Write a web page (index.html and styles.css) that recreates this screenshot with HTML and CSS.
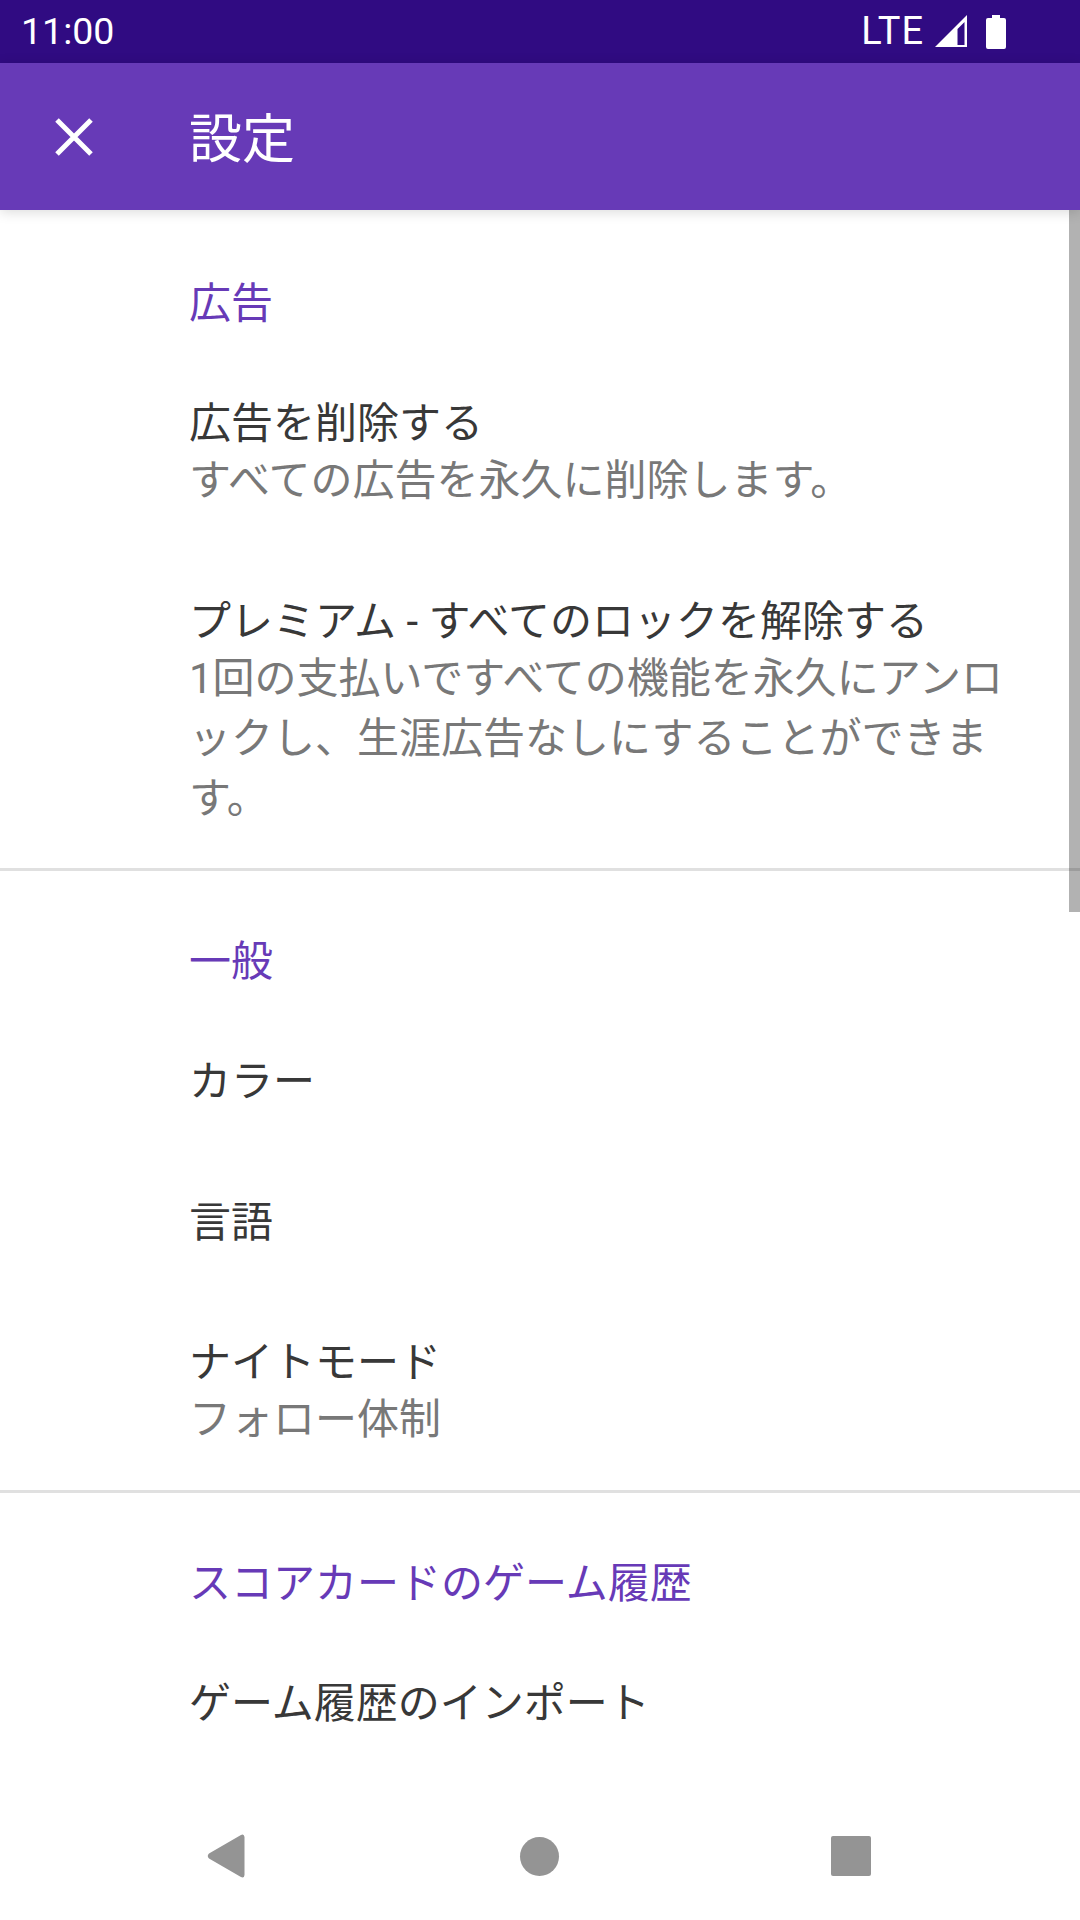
FILE: index.html
```html
<!DOCTYPE html>
<html lang="ja">
<head>
    <meta charset="UTF-8">
    <meta name="viewport" content="width=device-width, initial-scale=1.0">
    <link rel="stylesheet" href="styles.css">
    <title>設定</title>
</head>
<body>
    <div class="screen">
        <div class="status-bar">
            <span class="time">11:00</span>
            <div class="status-icons">
                <span class="lte">LTE</span>
                <svg class="signal" width="33" height="33" viewBox="0 0 33 33">
                    <path fill="#fff" fill-rule="evenodd" d="M32 0V32H0ZM29.500 7 22.500 14V30H29.500Z"/>
                </svg>
                <svg class="battery" width="20" height="34" viewBox="0 0 20 34">
                    <path fill="#fff" d="M6 0H14V3H18Q20 3 20 5V32Q20 34 18 34H2Q0 34 0 32V5Q0 3 2 3H6Z"/>
                </svg>
            </div>
        </div>

        <div class="toolbar">
            <svg class="close-icon" width="38" height="38" viewBox="0 0 38 38">
                <path stroke="#fff" stroke-width="5" d="M2 2 36 36M36 2 2 36"/>
            </svg>
            <h1>設定</h1>
        </div>

        <div class="list">
            <div class="scrollbar"></div>

            <section class="group">
                <h2>広告</h2>
                <div class="item">
                    <p class="title">広告を削除する</p>
                    <p class="summary">すべての広告を永久に削除します。</p>
                </div>
                <div class="item">
                    <p class="title">プレミアム - すべてのロックを解除する</p>
                    <p class="summary">1回の支払いですべての機能を永久にアンロックし、生涯広告なしにすることができます。</p>
                </div>
            </section>

            <section class="group">
                <h2>一般</h2>
                <div class="item">
                    <p class="title">カラー</p>
                </div>
                <div class="item">
                    <p class="title">言語</p>
                </div>
                <div class="item">
                    <p class="title">ナイトモード</p>
                    <p class="summary">フォロー体制</p>
                </div>
            </section>

            <section class="group">
                <h2>スコアカードのゲーム履歴</h2>
                <div class="item">
                    <p class="title">ゲーム履歴のインポート</p>
                </div>
            </section>
        </div>

        <div class="nav-bar">
            <svg width="38" height="44" viewBox="0 0 38 44">
                <path fill="#949494" d="M33.500 1.200Q37 -1 37.500 3V41Q37 45 33.500 42.800L2 24.500Q-0.500 22 2 19.500Z"/>
            </svg>
            <div class="nav-circle"></div>
            <div class="nav-square"></div>
        </div>
    </div>
</body>
</html>
```

FILE: styles.css
```css
*{
    box-sizing: border-box;
    font-family: Roboto, "Noto Sans CJK JP", sans-serif;
}

body{
    margin: 0;
    background-color: white;
}

.screen{
    width: 1080px;
    height: 1920px;
    display: flex;
    flex-direction: column;
    overflow: hidden;
}

.status-bar{
    height: 63px;
    flex: none;
    display: flex;
    align-items: center;
    justify-content: space-between;
    padding: 0 74px 0 21px;
    background-color: rgb(48, 11, 130);
    color: white;
}

.time{
    font-size: 37.5px;
    line-height: 63px;
}

.status-icons{
    display: flex;
    align-items: center;
    gap: 11px;
}

.lte{
    font-size: 38px;
    letter-spacing: 1px;
    line-height: 63px;
}

.signal{
    margin-right: 7px;
}

.toolbar{
    height: 147px;
    flex: none;
    display: flex;
    align-items: center;
    padding-left: 55px;
    background-color: rgb(103, 58, 183);
    box-shadow: 0 2px 12px rgba(0, 0, 0, 0.15);
    position: relative;
    z-index: 1;
}

.toolbar h1{
    margin: 0 0 4px 96px;
    font-size: 53px;
    font-weight: 400;
    color: white;
}

.list{
    flex: 1;
    min-height: 0;
    padding-top: 3px;
    overflow: hidden;
    position: relative;
}

.scrollbar{
    position: absolute;
    top: 0;
    right: 0;
    width: 11px;
    height: 702px;
    background-color: rgba(0, 0, 0, 0.3);
}

.group{
    padding-top: 61px;
    border-bottom: 3px solid rgb(224, 224, 224);
}

.group:last-of-type{
    border-bottom: none;
}

.group h2{
    margin: 0 0 19px;
    padding-left: 189px;
    font-size: 42px;
    line-height: 60px;
    font-weight: 400;
    color: rgb(103, 58, 183);
}

.item{
    padding: 41px 70px 39.5px 189px;
}

.title, .summary{
    margin: 0;
    font-size: 42px;
    line-height: 60px;
}

.title{
    color: rgb(56, 56, 56);
}

.summary{
    margin-top: -3px;
    color: rgb(120, 120, 120);
}

.nav-bar{
    height: 126px;
    flex: none;
    display: flex;
    align-items: center;
    justify-content: space-between;
    padding: 0 209px 2px 207px;
    background-color: white;
}

.nav-circle{
    width: 39px;
    height: 39px;
    margin-left: 2px;
    border-radius: 50%;
    background-color: rgb(148, 148, 148);
}

.nav-square{
    width: 40px;
    height: 40px;
    border-radius: 2px;
    background-color: rgb(148, 148, 148);
}
```
